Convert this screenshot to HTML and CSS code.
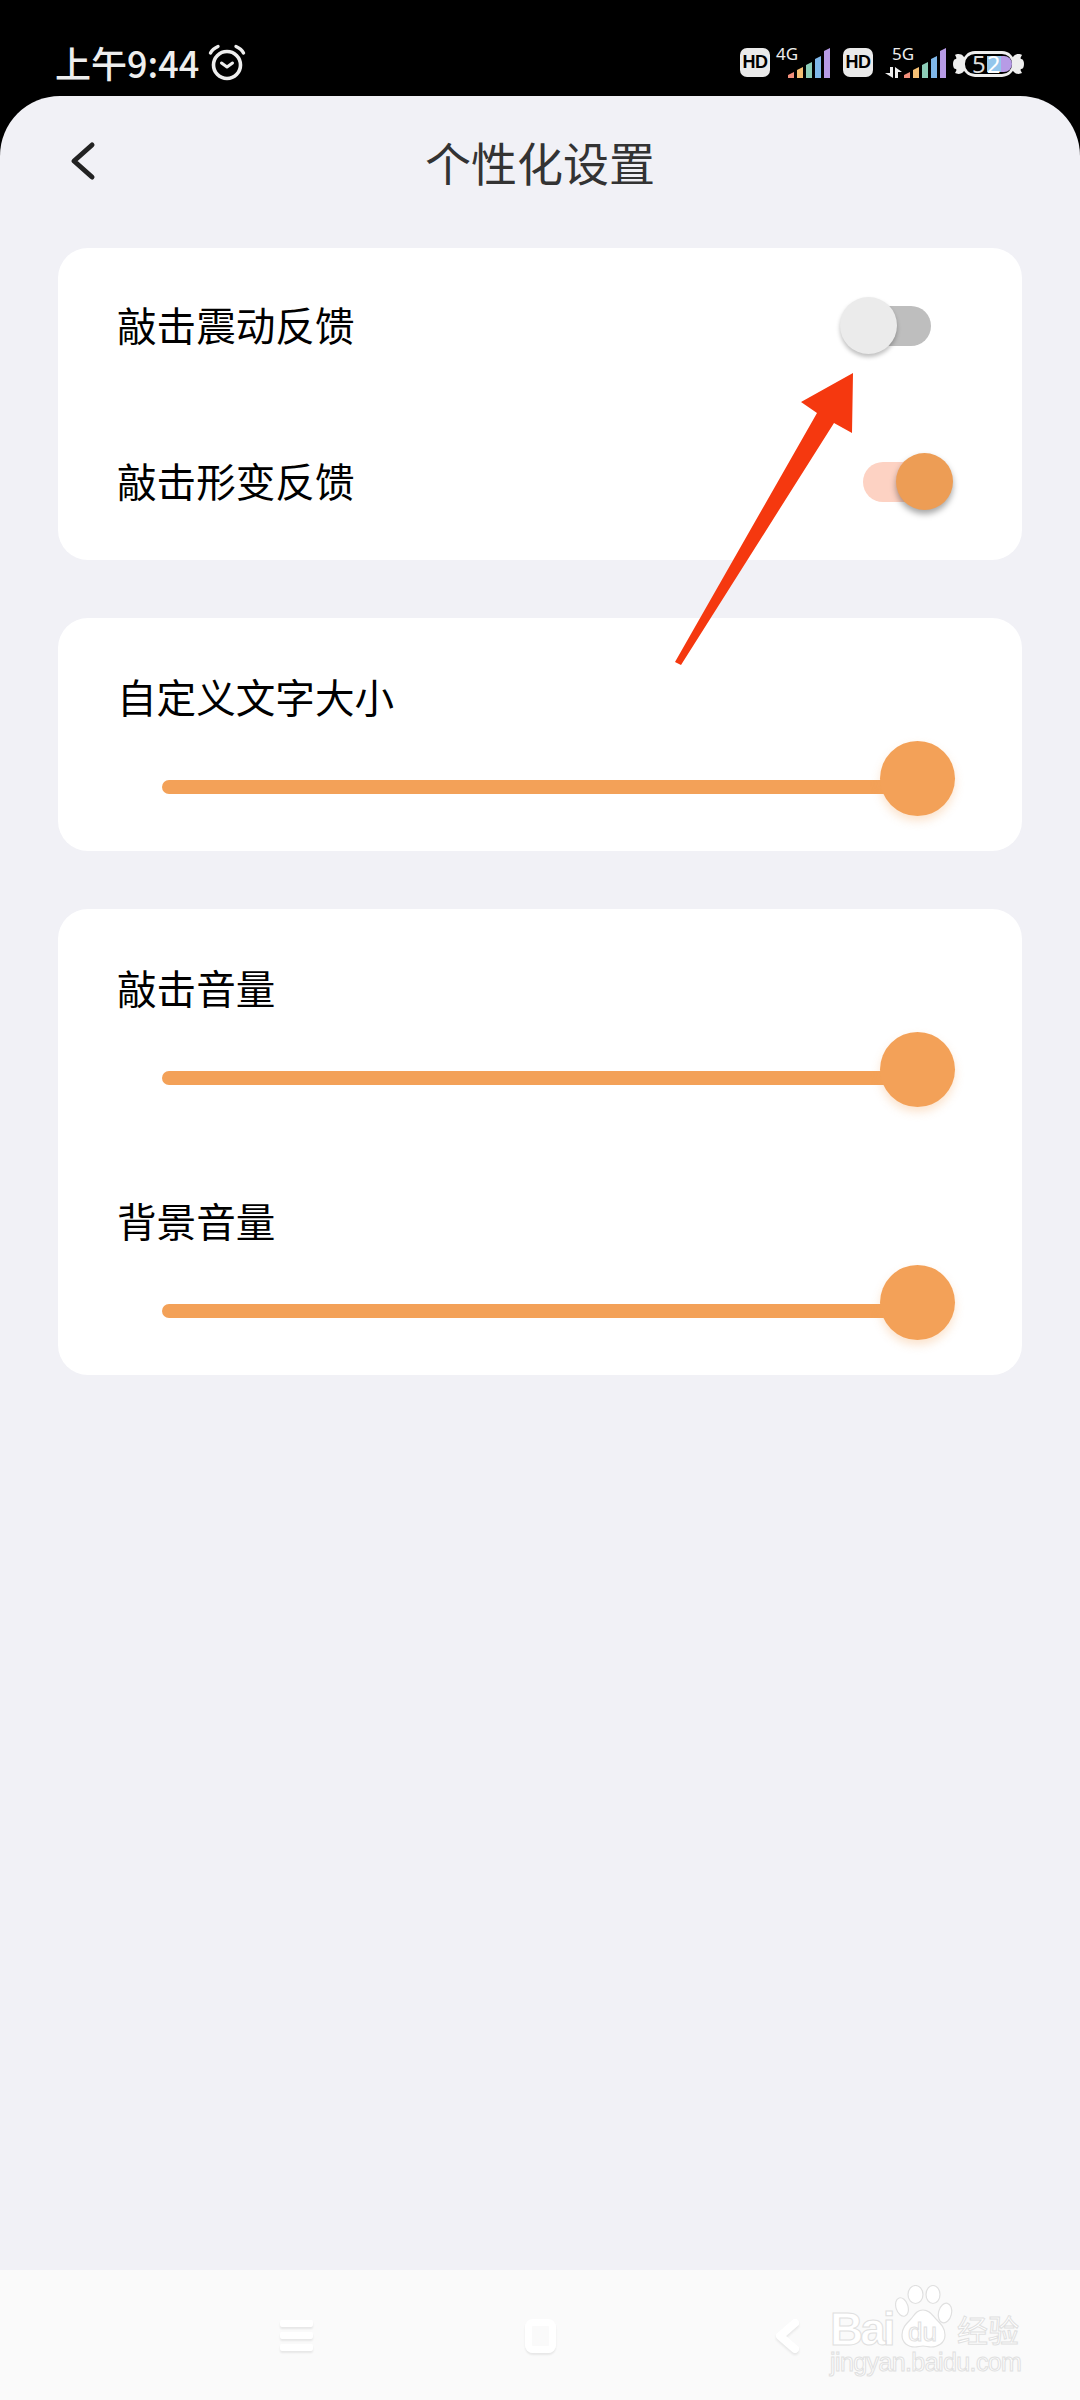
FILE: index.html
```html
<!DOCTYPE html>
<html lang="zh-CN">

<head>
    <meta charset="UTF-8">
    <meta name="viewport" content="width=device-width, initial-scale=1.0">
    <title>个性化设置</title>
    <link rel="stylesheet" href="styles.css">
</head>

<body>

    <div class="status-bar">
        <div class="status-left">
            <span class="clock">上午9:44</span>
            <svg class="alarm" width="44" height="40" viewBox="0 0 44 40" fill="none" stroke="#eee" stroke-linecap="round">
                <circle cx="21" cy="23" r="13.500" stroke-width="3.600" />
                <path d="M15.500 21l5.500 4 5.500-4" stroke-width="3" stroke-linejoin="round" />
                <path d="M4.500 11C6 8 8.500 6 12 4.500" stroke-width="3.400" />
                <path d="M37.500 11C36 8 33.500 6 30 4.500" stroke-width="3.400" />
            </svg>
        </div>
        <div class="status-right">
            <span class="hd">HD</span>
            <div class="net">
                <span class="net-label">4G</span>
                <svg width="42" height="30" viewBox="0 0 42 30" stroke-linejoin="round">
                    <path d="M0 30v-3l6-3v6z" fill="#f28f7c" />
                    <path d="M9 30v-8l6-3v11z" fill="#f5c074" />
                    <path d="M18 30v-13l6-3v16z" fill="#8ccdb8" />
                    <path d="M27 30v-19l6-3v22z" fill="#7fb8ea" />
                    <path d="M36 30v-27l6-3v30z" fill="#b79be6" />
                </svg>
            </div>
            <span class="hd hd-second">HD</span>
            <div class="net net-5g">
                <span class="net-label">5G</span>
                <svg class="net-arrows" width="17" height="11" viewBox="0 0 17 11" fill="#eee">
                    <path d="M5 0h3v11L0 6h5z" />
                    <path d="M10 0l7 5h-4v6h-3z" />
                </svg>
                <svg width="42" height="30" viewBox="0 0 42 30" stroke-linejoin="round">
                    <path d="M0 30v-3l6-3v6z" fill="#f28f7c" />
                    <path d="M9 30v-8l6-3v11z" fill="#f5c074" />
                    <path d="M18 30v-13l6-3v16z" fill="#8ccdb8" />
                    <path d="M27 30v-19l6-3v22z" fill="#7fb8ea" />
                    <path d="M36 30v-27l6-3v30z" fill="#b79be6" />
                </svg>
            </div>
            <div class="battery">
                <svg class="candy" width="71" height="26" viewBox="0 0 71 26" fill="#eee">
                    <path d="M11 6C8 2 4 3 2 4c1 2 2 3 1 4-2 0-3 2-3 5s1 5 3 5c1 1 0 2-1 4 2 1 6 2 9-2z" />
                    <path d="M60 6c3-4 7-3 9-2-1 2-2 3-1 4 2 0 3 2 3 5s-1 5-3 5c-1 1 0 2 1 4-2 1-6 2-9-2z" />
                    <rect x="10.500" y="1.500" width="50" height="23" rx="11.500" fill="#000" stroke="#eee" stroke-width="2.800" />
                    <rect x="34" y="5" width="14" height="16" fill="#93c6ec" />
                    <path d="M48 5h3a8 8 0 0 1 0 16h-3z" fill="#b79be6" />
                </svg>
                <span class="battery-num">5<span class="battery-num-top">2</span></span>
            </div>
        </div>
    </div>

    <div class="page">
        <div class="top-bar">
            <svg class="back" width="30" height="42" viewBox="0 0 30 42" fill="none" stroke="#222" stroke-width="5" stroke-linecap="round" stroke-linejoin="round">
                <path d="M23 5L5 21l18 16" />
            </svg>
            <h1 class="title">个性化设置</h1>
        </div>

        <div class="card">
            <div class="row">
                <span class="label">敲击震动反馈</span>
                <div class="switch">
                    <span class="switch-knob"></span>
                </div>
            </div>
            <div class="row">
                <span class="label">敲击形变反馈</span>
                <div class="switch on">
                    <span class="switch-knob"></span>
                </div>
            </div>
        </div>

        <div class="card card-text-size">
            <div class="slider-block">
                <div class="label">自定义文字大小</div>
                <div class="slider">
                    <div class="track"></div>
                    <span class="slider-knob"></span>
                </div>
            </div>
        </div>

        <div class="card card-volume">
            <div class="slider-block">
                <div class="label">敲击音量</div>
                <div class="slider">
                    <div class="track"></div>
                    <span class="slider-knob"></span>
                </div>
            </div>
            <div class="slider-block">
                <div class="label">背景音量</div>
                <div class="slider">
                    <div class="track"></div>
                    <span class="slider-knob"></span>
                </div>
            </div>
        </div>
    </div>

    <div class="nav-bar">
        <div class="nav-menu">
            <span></span>
            <span></span>
            <span></span>
        </div>
        <div class="nav-home"></div>
        <svg class="nav-back" width="26" height="36" viewBox="0 0 26 36" fill="none" stroke="#fff" stroke-width="8" stroke-linecap="round" stroke-linejoin="round">
            <path d="M21 5L6 18l15 13" />
        </svg>
    </div>

    <!-- annotation arrow drawn over the screenshot -->
    <svg class="arrow" width="1080" height="2400" viewBox="0 0 1080 2400">
        <polygon points="853,373 801,402 817,413 675,662 681,665 834,423 852,433" fill="#f5380f" />
    </svg>

    <!-- watermark -->
    <div class="watermark">
        <svg class="paw" width="58" height="64" viewBox="0 0 58 64" fill="#fff" stroke="#e0e0e0" stroke-width="1.200">
            <ellipse cx="7" cy="22" rx="6" ry="9.500" transform="rotate(-18 7 22)" />
            <ellipse cx="20.500" cy="9.500" rx="7.500" ry="9" />
            <ellipse cx="38" cy="9.500" rx="7" ry="9" />
            <ellipse cx="50" cy="28" rx="6.500" ry="10" transform="rotate(14 50 28)" />
            <path d="M28 25c-7 0-9 6-13 10-4 4-8 8-8 15 0 8 6 12 13 12 3 0 5-1 8-1s5 1 8 1c7 0 14-4 14-12 0-7-4-11-8-15-4-4-7-10-14-10z" />
        </svg>
        <span class="wm-bai">Bai</span>
        <span class="wm-du">du</span>
        <span class="wm-cn">经验</span>
        <span class="wm-url">jingyan.baidu.com</span>
    </div>

</body>

</html>
```

FILE: styles.css
```css
html,
body {
    margin: 0;
    padding: 0;
}

body {
    position: relative;
    width: 1080px;
    height: 2400px;
    overflow: hidden;
    display: flex;
    flex-direction: column;
    background-color: #000;
    font-family: "Noto Sans CJK SC", "Noto Sans", sans-serif;
}

.status-bar {
    height: 96px;
    display: flex;
    flex-shrink: 0;
    justify-content: space-between;
    padding-left: 55px;
    padding-right: 56px;
}

.status-left {
    display: flex;
    align-items: flex-start;
    padding-top: 41px;
}

.clock {
    font-size: 36px;
    line-height: 42px;
    font-weight: 500;
    color: #eee;
}

.alarm {
    margin-left: 7px;
    margin-top: 1px;
}

.status-right {
    width: 284px;
    display: flex;
    align-items: flex-start;
    padding-top: 48px;
}

.hd {
    width: 30px;
    height: 29px;
    line-height: 29px;
    border-radius: 7px;
    background-color: #eaeaea;
    color: #000;
    font-family: "Liberation Sans", sans-serif;
    font-size: 18px;
    font-weight: 700;
    text-align: center;
    letter-spacing: -0.5px;
}

.hd-second {
    margin-left: 13px;
}

.net {
    position: relative;
    width: 42px;
    height: 30px;
    margin-left: 18px;
}

.net-5g {
    margin-left: 31px;
}

.net-label {
    position: absolute;
    top: -4px;
    left: -12px;
    font-family: "Noto Sans", sans-serif;
    font-size: 17px;
    line-height: 20px;
    color: #eee;
}

.net svg {
    display: block;
}

.net .net-arrows {
    position: absolute;
    left: -19px;
    bottom: 0;
}

.battery {
    position: relative;
    width: 71px;
    height: 26px;
    margin-left: 7px;
    margin-top: 3px;
}

.candy {
    display: block;
}

.battery-num {
    position: absolute;
    top: 0;
    left: 19px;
    font-family: "Noto Sans", sans-serif;
    font-size: 24px;
    line-height: 26px;
    color: #ddd;
    letter-spacing: 1px;
}

.battery-num-top {
    color: #fff;
}

.page {
    flex: 1;
    background-color: #f1f1f6;
    border-radius: 60px 60px 0 0;
    padding-left: 58px;
    padding-right: 58px;
}

.top-bar {
    position: relative;
    height: 152px;
}

.back {
    position: absolute;
    left: 11px;
    top: 44px;
}

.title {
    margin: 0;
    text-align: center;
    font-size: 46px;
    font-weight: 400;
    line-height: 130px;
    color: #333;
}

.card {
    margin-bottom: 58px;
    background-color: #fff;
    border-radius: 30px;
}

.card-text-size {
    padding-bottom: 1px;
}

.card-volume {
    display: flex;
    flex-direction: column;
    gap: 1px;
    padding-bottom: 1px;
}

.row {
    height: 156px;
    display: flex;
    align-items: center;
    justify-content: space-between;
    padding-left: 59px;
    padding-right: 91px;
}

.label {
    font-size: 39.600px;
    line-height: 60px;
    color: #000;
}

.row .label {
    padding-bottom: 4px;
}

.switch {
    position: relative;
    width: 68px;
    height: 40px;
    border-radius: 20px;
    background-color: #bebebe;
}

.switch.on {
    background-color: #fdd2c3;
}

.switch-knob {
    position: absolute;
    top: -9px;
    left: -23px;
    width: 57px;
    height: 57px;
    border-radius: 50%;
    background-color: #ebebeb;
    box-shadow: 0 3px 4px rgba(0, 0, 0, 0.25);
}

.switch.on .switch-knob {
    left: 33px;
    background-color: #ed9d55;
    box-shadow: 0 4px 6px rgba(0, 0, 0, 0.35);
}

.slider-block {
    height: 232px;
    padding-top: 48px;
    padding-left: 59px;
    box-sizing: border-box;
}

.slider {
    position: relative;
    height: 75px;
    margin-top: 15px;
    margin-left: 45px;
    margin-right: 67px;
}

.track {
    position: absolute;
    top: 39px;
    left: 0;
    right: 30px;
    height: 14px;
    border-radius: 7px;
    background-color: #f3a158;
}

.slider-knob {
    position: absolute;
    top: 0;
    right: 0;
    width: 75px;
    height: 75px;
    border-radius: 50%;
    background-color: #f3a158;
    box-shadow: 0 5px 10px rgba(243, 161, 88, 0.3);
}

.nav-bar {
    position: relative;
    height: 130px;
    flex-shrink: 0;
    background-color: #fafafa;
}

.nav-menu {
    position: absolute;
    left: 280px;
    top: 50px;
    width: 33px;
    display: flex;
    flex-direction: column;
    gap: 5px;
}

.nav-menu span {
    height: 7px;
    border-radius: 2px;
    background-color: #fff;
    box-shadow: 0 2px 2px rgba(0, 0, 0, 0.08);
}

.nav-home {
    position: absolute;
    left: 525px;
    top: 49px;
    width: 17px;
    height: 20px;
    border: 7px solid #fff;
    border-radius: 8px;
    box-shadow: 0 2px 2px rgba(0, 0, 0, 0.08);
}

.nav-back {
    position: absolute;
    left: 774px;
    top: 48px;
    filter: drop-shadow(0 2px 1px rgba(0, 0, 0, 0.08));
}

.arrow {
    position: absolute;
    left: 0;
    top: 0;
    pointer-events: none;
}

.watermark {
    position: absolute;
    left: 829px;
    top: 2285px;
    width: 195px;
    height: 95px;
}

.paw {
    position: absolute;
    left: 66px;
    top: 0;
}

.wm-bai,
.wm-du,
.wm-cn,
.wm-url {
    position: absolute;
    color: #fff;
    -webkit-text-stroke: 1px #e0e0e0;
}

.wm-bai {
    left: 1px;
    top: 26px;
    font-family: "Liberation Sans", sans-serif;
    font-size: 46px;
    font-weight: 700;
    line-height: 36px;
    letter-spacing: -3px;
}

.wm-du {
    left: 79px;
    top: 32px;
    font-family: "Liberation Sans", sans-serif;
    font-size: 26px;
    line-height: 30px;
}

.wm-cn {
    left: 128px;
    top: 26px;
    font-size: 31px;
    line-height: 36px;
}

.wm-url {
    top: 65px;
    left: 1px;
    font-family: "Liberation Sans", sans-serif;
    font-size: 25px;
    line-height: 24px;
    letter-spacing: -0.6px;
}
```
